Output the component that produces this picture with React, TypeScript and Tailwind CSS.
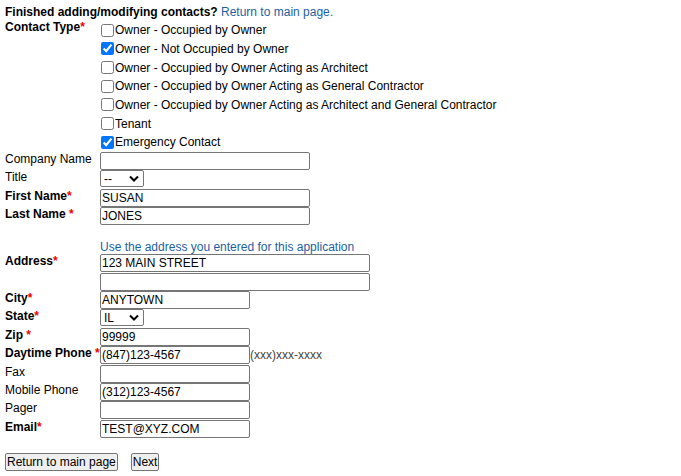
import React from "react";

const contactTypes = [
  { label: "Owner - Occupied by Owner", checked: false },
  { label: "Owner - Not Occupied by Owner", checked: true },
  { label: "Owner - Occupied by Owner Acting as Architect", checked: false },
  { label: "Owner - Occupied by Owner Acting as General Contractor", checked: false },
  { label: "Owner - Occupied by Owner Acting as Architect and General Contractor", checked: false },
  { label: "Tenant", checked: false },
  { label: "Emergency Contact", checked: true },
];

function Req() {
  return <span className="text-[#ee0000]">*</span>;
}

function Label({ text, bold, req, space }: { text: string; bold?: boolean; req?: boolean; space?: boolean }) {
  return (
    <div className={"w-[95px] shrink-0 whitespace-nowrap leading-[14px] " + (bold ? "font-bold" : "")}>
      {text}
      {req && (space ? " " : "")}
      {req && <Req />}
    </div>
  );
}

function TextBox({ value, width }: { value?: string; width: string }) {
  return (
    <input
      type="text"
      readOnly
      value={value ?? ""}
      className={
        "h-[18px] border border-[#767676] rounded-[2px] bg-white px-[1px] text-[12px] leading-[16px] text-black outline-none " +
        width
      }
    />
  );
}

function SelectBox({ value }: { value: string }) {
  return (
    <div className="flex h-[17px] w-[44px] items-center justify-between border border-[#767676] rounded-[2px] bg-white pl-[3px] pr-[4px]">
      <span className="leading-[14px]">{value}</span>
      <svg width="10" height="7" viewBox="0 0 10 7">
        <path d="M1 1.5 L5 5.5 L9 1.5" fill="none" stroke="#000" strokeWidth="2" />
      </svg>
    </div>
  );
}

function Row({ children }: { children: React.ReactNode }) {
  return <div className="flex h-[18.4px] items-start">{children}</div>;
}

export default function App() {
  return (
    <div className="bg-white pl-[5px] pt-[5px] font-['Arial','Liberation_Sans',sans-serif] text-[12px] text-black min-h-[476px]">
      <div className="leading-[14px]">
        <span className="font-bold">Finished adding/modifying contacts?</span>{" "}
        <a className="text-[#1c5fa3]" href="#">
          Return to main page.
        </a>
      </div>

      {/* contact type */}
      <div className="flex pt-[1px]">
        <div className="w-[95px] shrink-0 font-bold leading-[14px]">
          Contact Type<Req />
        </div>
        <div className="flex flex-col pt-[1px]">
          {contactTypes.map((t) => (
            <label key={t.label} className="flex h-[18.67px] items-center whitespace-nowrap">
              <input
                type="checkbox"
                readOnly
                checked={t.checked}
                className="m-0 ml-[1px] mr-[1px] h-[13px] w-[13px]"
              />
              <span className="leading-[14px]">{t.label}</span>
            </label>
          ))}
        </div>
      </div>

      <div className="flex flex-col pt-[0.3px]">
        <Row>
          <Label text="Company Name" />
          <TextBox width="w-[210px]" />
        </Row>
        <Row>
          <Label text="Title" />
          <SelectBox value="--" />
        </Row>
        <Row>
          <Label text="First Name" bold req />
          <TextBox value="SUSAN" width="w-[210px]" />
        </Row>
        <Row>
          <Label text="Last Name" bold req space />
          <TextBox value="JONES" width="w-[210px]" />
        </Row>

        <div className="flex h-[28.8px] items-end pb-[0px] pl-[95px]">
          <a className="leading-[14px] text-[#1c5fa3]" href="#">
            Use the address you entered for this application
          </a>
        </div>

        <Row>
          <Label text="Address" bold req />
          <TextBox value="123 MAIN STREET" width="w-[270px]" />
        </Row>
        <Row>
          <Label text="" />
          <TextBox width="w-[270px]" />
        </Row>
        <Row>
          <Label text="City" bold req />
          <TextBox value="ANYTOWN" width="w-[150px]" />
        </Row>
        <Row>
          <Label text="State" bold req />
          <SelectBox value="IL" />
        </Row>
        <Row>
          <Label text="Zip" bold req space />
          <TextBox value="99999" width="w-[150px]" />
        </Row>
        <Row>
          <Label text="Daytime Phone" bold req space />
          <TextBox value="(847)123-4567" width="w-[150px]" />
          <span className="pt-[2px] leading-[14px] text-[#444]">(xxx)xxx-xxxx</span>
        </Row>
        <Row>
          <Label text="Fax" />
          <TextBox width="w-[150px]" />
        </Row>
        <Row>
          <Label text="Mobile Phone" />
          <TextBox value="(312)123-4567" width="w-[150px]" />
        </Row>
        <Row>
          <Label text="Pager" />
          <TextBox width="w-[150px]" />
        </Row>
        <Row>
          <Label text="Email" bold req />
          <TextBox value="TEST@XYZ.COM" width="w-[150px]" />
        </Row>
      </div>

      <div className="flex gap-[13px] pt-[15px]">
        <button className="h-[18px] border border-[#767676] rounded-[2px] bg-[#efefef] px-[1px] leading-[14px]">
          Return to main page
        </button>
        <button className="h-[18px] border border-[#767676] rounded-[2px] bg-[#efefef] px-[1px] leading-[14px]">
          Next
        </button>
      </div>
    </div>
  );
}
